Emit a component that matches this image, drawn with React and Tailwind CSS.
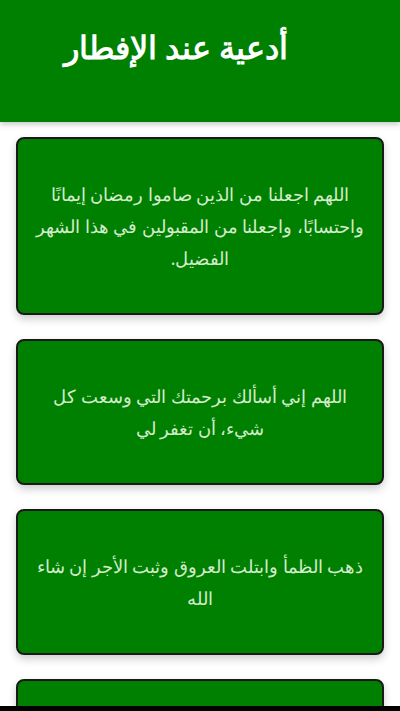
import React from "react";

const duas = [
  "اللهم اجعلنا من الذين صاموا رمضان إيمانًا واحتسابًا، واجعلنا من المقبولين في هذا الشهر الفضيل.",
  "اللهم إني أسألك برحمتك التي وسعت كل شيء، أن تغفر لي",
  "ذهب الظمأ وابتلت العروق وثبت الأجر إن شاء الله",
  "اللهم لك صمت وعلى رزقك أفطرت",
];

const App = () => {
  return (
    <div dir="rtl" className="min-h-screen bg-white" style={{ fontFamily: '"Noto Sans", sans-serif' }}>
      <header className="h-[122px] bg-[#008000] shadow-[0_2px_6px_rgba(0,0,0,0.25)] pr-12 pt-[24px]">
        <h1 className="text-center text-[32px] font-bold text-white leading-[46px]">أدعية عند الإفطار</h1>
      </header>

      <div className="px-4 pt-[15px] flex flex-col gap-6">
        {duas.map((dua) => (
          <div
            key={dua}
            className="bg-[#008000] border-2 border-[#1a1a1a] rounded-lg shadow-[0_4px_8px_rgba(0,0,0,0.2)] px-3 py-[39px]"
          >
            <p className="text-center text-[17.5px] leading-8 text-[#d4ebcc]">{dua}</p>
          </div>
        ))}
      </div>

      <div className="fixed bottom-0 left-0 right-0 h-[5px] bg-black"></div>
    </div>
  );
};

export default App;
